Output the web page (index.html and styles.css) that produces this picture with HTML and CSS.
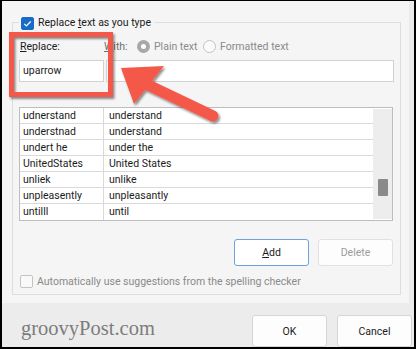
FILE: index.html
```html
<!DOCTYPE html>
<html>
<head>
<meta charset="utf-8">
<link rel="stylesheet" href="styles.css">
</head>
<body>
<div class="frame">
  <div class="main">
    <div class="group">
      <div class="legend">
        <span class="cb checked"><svg viewBox="0 0 13 13" width="13" height="13"><path d="M3.3 6.9l2.1 2.1 4.3-4.5" fill="none" stroke="#fff" stroke-width="1.2"/></svg></span>
        <span class="legend-text">Replace <u>t</u>ext as you type</span>
      </div>
      <div class="labels">
        <span class="lbl-replace"><u>R</u>eplace:</span>
        <span class="lbl-with"><u>W</u>ith:</span>
        <span class="radio sel"></span><span class="rtext plain">Plain text</span>
        <span class="radio"></span><span class="rtext">Formatted text</span>
      </div>
      <div class="inputs">
        <div class="in-replace">uparrow</div>
        <div class="in-with"></div>
      </div>
      <div class="table">
        <div class="rows">
          <div class="row"><span class="c1">udnerstand</span><span class="c2">understand</span></div>
          <div class="row"><span class="c1">understnad</span><span class="c2">understand</span></div>
          <div class="row"><span class="c1">undert he</span><span class="c2">under the</span></div>
          <div class="row"><span class="c1">UnitedStates</span><span class="c2">United States</span></div>
          <div class="row"><span class="c1">unliek</span><span class="c2">unlike</span></div>
          <div class="row"><span class="c1">unpleasently</span><span class="c2">unpleasantly</span></div>
          <div class="row"><span class="c1">untilll</span><span class="c2">until</span></div>
        </div>
        <div class="scroll"><div class="thumb"></div></div>
      </div>
      <div class="btns">
        <button class="btn add"><u>A</u>dd</button>
        <button class="btn del">Delete</button>
      </div>
      <div class="auto">
        <span class="cb"></span>
        <span class="auto-text">Automatically use suggestions from the spelling checker</span>
      </div>
    </div>
  </div>
  <div class="footer">
    <span class="brand">groovyPost.com</span>
    <div class="fbtns">
      <button class="btn fbtn">OK</button>
      <button class="btn fbtn">Cancel</button>
    </div>
  </div>
  <svg class="annot" width="416" height="349" viewBox="0 0 416 349">
    <defs>
      <filter id="sh" x="-20%" y="-20%" width="140%" height="140%">
        <feDropShadow dx="1.5" dy="2" stdDeviation="1.2" flood-color="#000" flood-opacity="0.45"/>
      </filter>
    </defs>
    <g filter="url(#sh)">
      <rect x="11.5" y="34.5" width="99" height="60" fill="none" stroke="#f3584a" stroke-width="5"/>
    </g>
    <g filter="url(#sh)" fill="#f3584a">
      <line x1="148" y1="85" x2="213" y2="116" stroke="#f3584a" stroke-width="11" stroke-linecap="round"/>
      <polygon points="121,68 164,66 134,104"/>
    </g>
  </svg>
</div>
</body>
</html>
```

FILE: styles.css
```css
* { box-sizing: border-box; }
html, body { margin: 0; padding: 0; }
body {
  font-family: Roboto, "Noto Sans", sans-serif;
  font-size: 10.5px;
  color: #1b1b1b;
  background: #000;
}
.frame {
  position: relative;
  width: 416px;
  height: 349px;
  border-style: solid;
  border-color: #000;
  border-width: 1px 2px 2px 2px;
  background: #f5f5f5;
  overflow: hidden;
  display: flex;
  flex-direction: column;
}
.main {
  height: 304px;
  padding: 21px 0 0 10px;
  box-shadow: inset -5px 0 0 #ebebeb;
}
.group {
  width: 389px;
  height: 273px;
  border: 1px solid #dedede;
  display: flex;
  flex-direction: column;
}
.legend {
  display: flex;
  align-items: center;
  align-self: flex-start;
  height: 14px;
  margin: -7px 0 0 6px;
  padding: 0 3px 0 2px;
  background: #f5f5f5;
  gap: 4px;
  line-height: 14px;
}
.cb {
  width: 13px;
  height: 13px;
  border: 1px solid #c4c4c4;
  border-radius: 2px;
  background: #f9f9f9;
  flex: none;
  display: block;
}
.cb.checked {
  background: #1a6ac8;
  border-color: #1a6ac8;
}
.cb.checked svg { display: block; margin: -1px; }
u { text-decoration-thickness: 1px; text-underline-offset: 1px; }
.labels {
  display: flex;
  align-items: center;
  height: 16px;
  margin-top: 8px;
  padding-left: 7px;
}
.lbl-replace { width: 84px; }
.lbl-with { width: 33px; color: #6d6d6d; }
.radio {
  width: 13px;
  height: 13px;
  border-radius: 50%;
  border: 1px solid #c2c2c2;
  background: #fafafa;
  flex: none;
  margin-right: 4px;
}
.radio.sel {
  border: 4px solid #a8a8a8;
  background: #fff;
}
.rtext { color: #8a8a8a; }
.rtext.plain { width: 49px; }
.inputs {
  display: flex;
  gap: 2px;
  margin: 6px 0 0 6px;
  height: 22px;
}
.in-replace, .in-with {
  height: 22px;
  border: 1px solid #d2d2d2;
  background: #fff;
  line-height: 20px;
  padding-left: 3px;
}
.in-replace { width: 85px; }
.in-with { width: 288px; }
.table {
  display: flex;
  margin: 25px 0 0 6px;
  width: 374px;
  height: 114px;
  border: 1px solid #bdbdbd;
  background: #fff;
}
.rows { width: 353px; }
.row {
  display: flex;
  height: 16px;
  border-bottom: 1px solid #d9d9d9;
  line-height: 15px;
}
.row:last-child { border-bottom: none; }
.c1 {
  width: 84px;
  border-right: 1px solid #d9d9d9;
  padding-left: 3px;
}
.c2 { padding-left: 5px; }
.scroll {
  width: 19px;
  background: #ededed;
  margin: 1px 0;
  display: flex;
  flex-direction: column;
  align-items: center;
}
.thumb {
  width: 10px;
  height: 17px;
  margin-top: 70px;
  background: #8a8a8a;
  border-radius: 1px;
}
.btns {
  display: flex;
  justify-content: flex-end;
  gap: 9px;
  margin-top: 18px;
  padding-right: 7px;
}
.btn {
  font-family: inherit;
  font-size: 10.5px;
  width: 75px;
  height: 27px;
  border: 1px solid #dcdcdc;
  border-radius: 3px;
  background: #fdfdfd;
  color: #1b1b1b;
  padding: 0;
}
.btn.add { border-color: #6ea2dc; background: #fff; }
.btn.del { color: #9c9c9c; border-color: #e1e1e1; }
.auto {
  display: flex;
  align-items: center;
  gap: 4px;
  margin-top: 8px;
  padding-left: 7px;
  height: 14px;
}
.auto-text { color: #8a8a8a; }
.footer {
  flex: 1;
  background: #ececec;
  display: flex;
  justify-content: space-between;
  align-items: flex-start;
  padding: 12px 2px 0 19px;
}
.brand {
  font-family: "Liberation Serif", "DejaVu Serif", serif;
  font-size: 20.5px;
  line-height: 22px;
  color: #7c7c7c;
  margin-top: 2px;
}
.fbtns { display: flex; gap: 10px; }
.fbtn { height: 32px; border-color: #d6d6d6; background: #fdfdfd; }
.annot {
  position: absolute;
  left: -2px;
  top: -1px;
  pointer-events: none;
}
```
